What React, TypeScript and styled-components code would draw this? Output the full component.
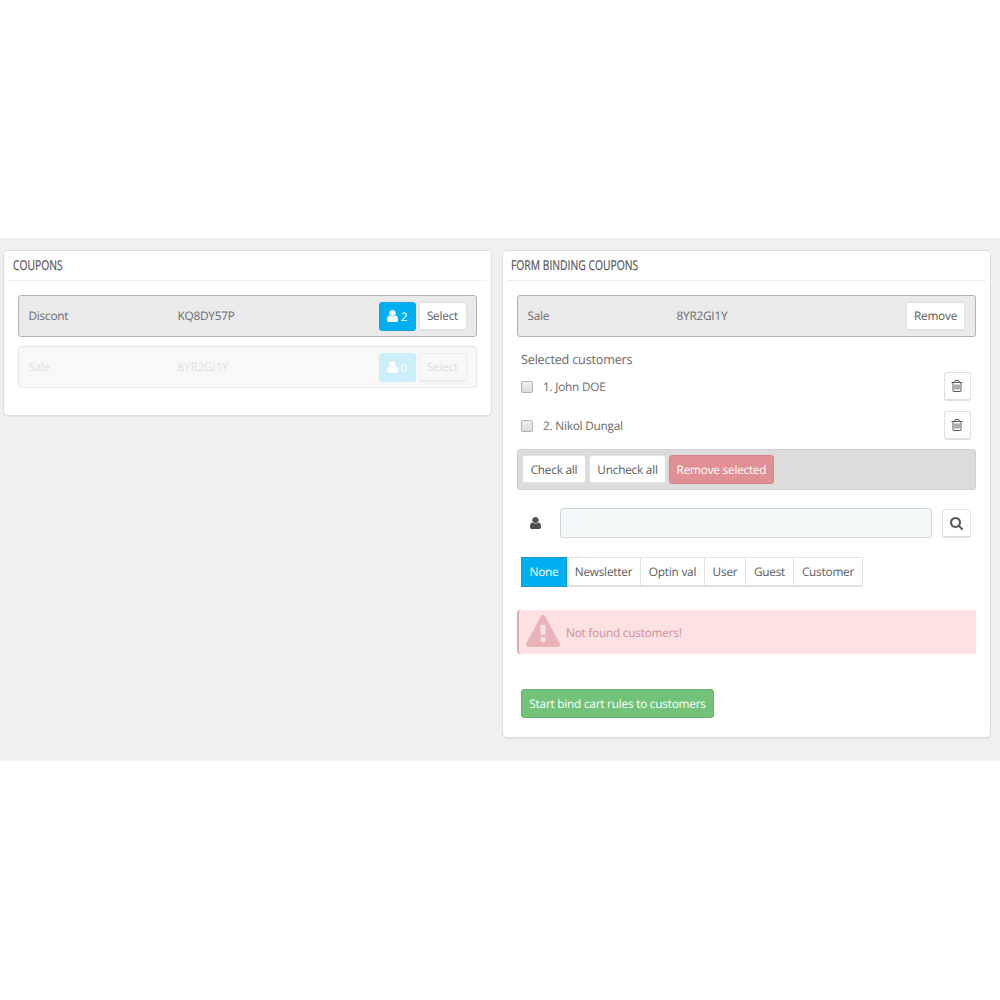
import React, { useState } from "react";
import styled, { createGlobalStyle, css } from "styled-components";

const GlobalStyle = createGlobalStyle`
  * { box-sizing: border-box; }
  body {
    margin: 0;
    background: #fff;
    font-family: "Open Sans", "Noto Sans", sans-serif;
    font-size: 11.8px;
    letter-spacing: -0.22px;
    text-rendering: geometricPrecision;
    color: #6a6a6a;
  }
  button { font: inherit; letter-spacing: inherit; text-rendering: inherit; }
`;

const Page = styled.main`
  display: flex;
  flex-direction: column;
  justify-content: flex-start;
  height: 1000px;
  padding-top: 238px;
  overflow: hidden;
`;

const Band = styled.div`
  display: grid;
  grid-template-columns: 489px 489px;
  column-gap: 10px;
  align-items: start;
  height: 523px;
  padding: 12px 0 0 3px;
  background: #eff0f2;
`;

const Panel = styled.section<{ $height: number }>`
  height: ${(p) => p.$height}px;
  padding: 0 4px;
  background: #fff;
  border: 1px solid #dcdfe1;
  border-radius: 5px;
  box-shadow: 0 1px 1px rgba(0, 0, 0, 0.06);
`;

const PanelHeader = styled.header<{ $inset: number }>`
  height: 30px;
  padding: 0 ${(p) => p.$inset}px;
  border-bottom: 1px solid #eee;
`;

const PanelTitle = styled.h2`
  margin: 0;
  width: max-content;
  font-size: 13.5px;
  font-weight: 400;
  letter-spacing: 0;
  line-height: 29px;
  color: #555;
  -webkit-text-stroke: 0.2px #555;
  transform: scaleX(0.765);
  transform-origin: left center;
`;

const PanelBody = styled.div`
  display: flex;
  flex-direction: column;
  padding: 14px 10px 0;
`;

const CouponRow = styled.div<{ $faded?: boolean; $right?: number }>`
  display: grid;
  grid-template-columns: 149px 1fr auto;
  align-items: center;
  height: 42px;
  margin-bottom: 9px;
  padding: 0 ${(p) => p.$right ?? 9.5}px 0 9.5px;
  background: #eaeaea;
  border: 1px solid #b2b2b2;
  border-radius: 3px;
  ${(p) =>
    p.$faded &&
    css`
      opacity: 0.2;
      background: #dedede;
      border-color: #8a8a8a;
    `}
`;

const CouponText = styled.span`
  padding-bottom: 1px;
`;

const Actions = styled.div`
  display: flex;
  align-items: center;
  gap: 3px;
`;

const Button = styled.button<{ $width: number; $tone?: "blue" | "red" | "green"; $ghost?: boolean }>`
  display: inline-flex;
  align-items: center;
  justify-content: center;
  gap: 3px;
  flex: none;
  width: ${(p) => p.$width}px;
  height: 29px;
  padding: 1px 0 0;
  white-space: nowrap;
  color: #5a5a5a;
  background: ${(p) => (p.$ghost ? "transparent" : "#fff")};
  border: 1px solid ${(p) => (p.$ghost ? "#aaa" : "#e0e0e0")};
  border-bottom-width: 2px;
  border-radius: 3px;
  ${(p) =>
    p.$tone === "blue" &&
    css`
      color: #fff;
      background: #00aff0;
      border: 1px solid #10a3df;
    `}
  ${(p) =>
    p.$tone === "red" &&
    css`
      color: #fff;
      background: #e08f95;
      border: 1px solid #d2848c;
    `}
  ${(p) =>
    p.$tone === "green" &&
    css`
      color: #fff;
      background: #72c279;
      border: 1px solid #65b56c;
    `}
`;

const IconButton = styled(Button)`
  padding: 0 1px 0 0;
`;

const Subheading = styled.h3`
  margin: 4px 0 0 4px;
  font-size: 12.7px;
  font-weight: 400;
  line-height: 18px;
`;

const CustomerRow = styled.label`
  display: flex;
  align-items: center;
  height: 39px;
  padding: 0 5px 0 4px;

  &:first-of-type { margin-top: -1px; }
`;

const Check = styled.input`
  appearance: none;
  width: 12px;
  height: 12px;
  margin: 1px 10px 0 0;
  background: linear-gradient(#f0f0f0, #dcdcdc);
  border: 1px solid #b2b2b2;
  border-radius: 2px;
  &:checked { background: #00aff0; }
`;

const CustomerName = styled.span`
  flex: 1;
`;

const BulkBar = styled.div`
  display: flex;
  align-items: center;
  gap: 3px;
  height: 41px;
  margin-top: 4px;
  padding: 0 4px;
  background: #dcdcdc;
  border: 1px solid #d0d0d0;
  border-radius: 3px;
`;

const SearchRow = styled.div`
  display: flex;
  align-items: center;
  height: 30px;
  margin-top: 18px;
  padding: 0 4px 0 13px;
`;

const SearchInput = styled.input`
  width: 372px;
  height: 30px;
  margin: 0 10px 0 19px;
  padding: 0 8px;
  color: #555;
  font: inherit;
  background: #f4f8f9;
  border: 1px solid #ced8da;
  border-radius: 3px;
  outline: none;
`;

const Tabs = styled.div`
  display: flex;
  height: 30px;
  margin: 19px 0 0 4px;
`;

const Tab = styled.button<{ $width: number; $active: boolean }>`
  width: ${(p) => p.$width}px;
  flex: none;
  padding: ${(p) => (p.$active ? 0 : 1)}px 0 0;
  white-space: nowrap;
  color: ${(p) => (p.$active ? "#fff" : "#5a5a5a")};
  background: ${(p) => (p.$active ? "#00aff0" : "#fff")};
  border: 1px solid ${(p) => (p.$active ? "#109bd3" : "#e0e0e0")};
  border-left-width: ${(p) => (p.$active ? 1 : 0)}px;
  border-bottom-width: ${(p) => (p.$active ? 1 : 2)}px;
`;

const Alert = styled.div`
  display: flex;
  align-items: center;
  gap: 6px;
  height: 44px;
  margin-top: 23px;
  padding-left: 7px;
  color: #cc8f97;
  background: #fee1e3;
  border-left: 2px solid #e4a9af;
  border-radius: 3px;
`;

const AlertText = styled.span`
  padding-top: 1px;
`;

const Footer = styled.footer`
  padding: 35px 0 0 4px;
`;

const Glyph = styled.svg`
  display: block;
  flex: none;
  fill: currentColor;
`;

const UserGlyph = styled(Glyph)`
  margin-bottom: 1px;
`;

const UserIcon = ({ color }: { color?: string }) => (
  <UserGlyph width="11" height="12" viewBox="0 128 1280 1536" preserveAspectRatio="none" color={color} aria-hidden>
    <path d="M1280 1399q0 109-62.5 187t-150.5 78h-854q-88 0-150.5-78t-62.5-187q0-85 8.5-160.5t31.5-152 58.5-131 94-89 134.5-34.5q131 128 313 128t313-128q76 0 134.5 34.5t94 89 58.5 131 31.5 152 8.5 160.5zm-256-887q0 159-112.5 271.5t-271.5 112.5-271.5-112.5-112.5-271.5 112.5-271.5 271.5-112.5 271.5 112.5 112.5 271.5z" />
  </UserGlyph>
);

const TrashIcon = () => (
  <Glyph width="14" height="14" viewBox="0 0 1792 1792" aria-hidden>
    <path d="M704 736v576q0 14-9 23t-23 9h-64q-14 0-23-9t-9-23v-576q0-14 9-23t23-9h64q14 0 23 9t9 23zm256 0v576q0 14-9 23t-23 9h-64q-14 0-23-9t-9-23v-576q0-14 9-23t23-9h64q14 0 23 9t9 23zm256 0v576q0 14-9 23t-23 9h-64q-14 0-23-9t-9-23v-576q0-14 9-23t23-9h64q14 0 23 9t9 23zm128 724v-948h-896v948q0 22 7 40.5t14.5 27 10.5 8.5h832q3 0 10.5-8.5t14.5-27 7-40.5zm-672-1076h448l-48-117q-7-9-17-11h-317q-10 2-17 11zm928 32v64q0 14-9 23t-23 9h-96v948q0 83-47 143.5t-113 60.5h-832q-66 0-113-58.5t-47-141.5v-952h-96q-14 0-23-9t-9-23v-64q0-14 9-23t23-9h309l70-167q15-37 54-63t79-26h320q40 0 79 26t54 63l70 167h309q14 0 23 9t9 23z" />
  </Glyph>
);

const SearchIcon = () => (
  <Glyph width="13" height="13" viewBox="64 128 1664 1664" aria-hidden>
    <path d="M1216 832q0-185-131.5-316.5t-316.5-131.5-316.5 131.5-131.5 316.5 131.5 316.5 316.5 131.5 316.5-131.5 131.5-316.5zm512 832q0 52-38 90t-90 38q-54 0-90-38l-343-342q-179 124-399 124-143 0-273.5-55.5t-225-150-150-225-55.5-273.5 55.5-273.5 150-225 225-150 273.5-55.5 273.5 55.5 225 150 150 225 55.5 273.5q0 220-124 399l343 343q37 37 37 90z" />
  </Glyph>
);

const WarningGlyph = styled(Glyph)`
  margin-bottom: 2px;
`;

const WarningIcon = () => (
  <WarningGlyph width="34" height="32" viewBox="0 0 1792 1664" preserveAspectRatio="none" color="#e9b3b8" aria-hidden>
    <path d="M1024 1375v-190q0-14-9.5-23.5t-22.5-9.5h-192q-13 0-22.5 9.5t-9.5 23.5v190q0 14 9.5 23.5t22.5 9.5h192q13 0 22.5-9.5t9.5-23.5zm-2-374l18-459q0-12-10-19-13-11-24-11h-220q-11 0-24 11-10 7-10 21l17 457q0 10 10 16.5t24 6.5h185q14 0 23.5-6.5t10.5-16.5zm-14-934l768 1408q35 63-2 126-17 29-46.5 46t-63.5 17h-1536q-34 0-63.5-17t-46.5-46q-37-63-2-126l768-1408q17-31 47-49t65-18 65 18 47 49z" />
  </WarningGlyph>
);

const coupons = [
  { name: "Discont", code: "KQ8DY57P", users: 2, used: false },
  { name: "Sale", code: "8YR2GI1Y", users: 0, used: true },
];

const filters = [
  { label: "None", width: 46 },
  { label: "Newsletter", width: 74 },
  { label: "Optin val", width: 64 },
  { label: "User", width: 41 },
  { label: "Guest", width: 48 },
  { label: "Customer", width: 69 },
];

const customers = ["1. John DOE", "2. Nikol Dungal"];

export default function App() {
  const [filter, setFilter] = useState("None");
  const [checked, setChecked] = useState(customers.map(() => false));

  return (
    <Page>
      <GlobalStyle />
      <Band>
        <Panel $height={166}>
          <PanelHeader $inset={5}>
            <PanelTitle>COUPONS</PanelTitle>
          </PanelHeader>
          <PanelBody>
            {coupons.map((c) => (
              <CouponRow key={c.code} $faded={c.used}>
                <CouponText>{c.name}</CouponText>
                <CouponText>{c.code}</CouponText>
                <Actions>
                  <Button $width={37} $tone="blue">
                    <UserIcon />
                    {c.users}
                  </Button>
                  <Button $width={48} $ghost={c.used}>
                    Select
                  </Button>
                </Actions>
              </CouponRow>
            ))}
          </PanelBody>
        </Panel>

        <Panel $height={488}>
          <PanelHeader $inset={4}>
            <PanelTitle>FORM BINDING COUPONS</PanelTitle>
          </PanelHeader>
          <PanelBody>
            <CouponRow $right={10}>
              <CouponText>Sale</CouponText>
              <CouponText>8YR2GI1Y</CouponText>
              <Button $width={59}>Remove</Button>
            </CouponRow>
            <Subheading>Selected customers</Subheading>
            {customers.map((name, i) => (
              <CustomerRow key={name}>
                <Check
                  type="checkbox"
                  checked={checked[i]}
                  onChange={() => setChecked(checked.map((v, n) => (n === i ? !v : v)))}
                />
                <CustomerName>{name}</CustomerName>
                <IconButton $width={27} aria-label="Delete">
                  <TrashIcon />
                </IconButton>
              </CustomerRow>
            ))}
            <BulkBar>
              <Button $width={64} onClick={() => setChecked(customers.map(() => true))}>
                Check all
              </Button>
              <Button $width={77} onClick={() => setChecked(customers.map(() => false))}>
                Uncheck all
              </Button>
              <Button $width={105} $tone="red">
                Remove selected
              </Button>
            </BulkBar>
            <SearchRow>
              <UserIcon color="#505050" />
              <SearchInput type="text" />
              <Button $width={29} aria-label="Search">
                <SearchIcon />
              </Button>
            </SearchRow>
            <Tabs>
              {filters.map((f) => (
                <Tab key={f.label} $width={f.width} $active={filter === f.label} onClick={() => setFilter(f.label)}>
                  {f.label}
                </Tab>
              ))}
            </Tabs>
            <Alert>
              <WarningIcon />
              <AlertText>Not found customers!</AlertText>
            </Alert>
            <Footer>
              <Button $width={193} $tone="green">
                Start bind cart rules to customers
              </Button>
            </Footer>
          </PanelBody>
        </Panel>
      </Band>
    </Page>
  );
}
